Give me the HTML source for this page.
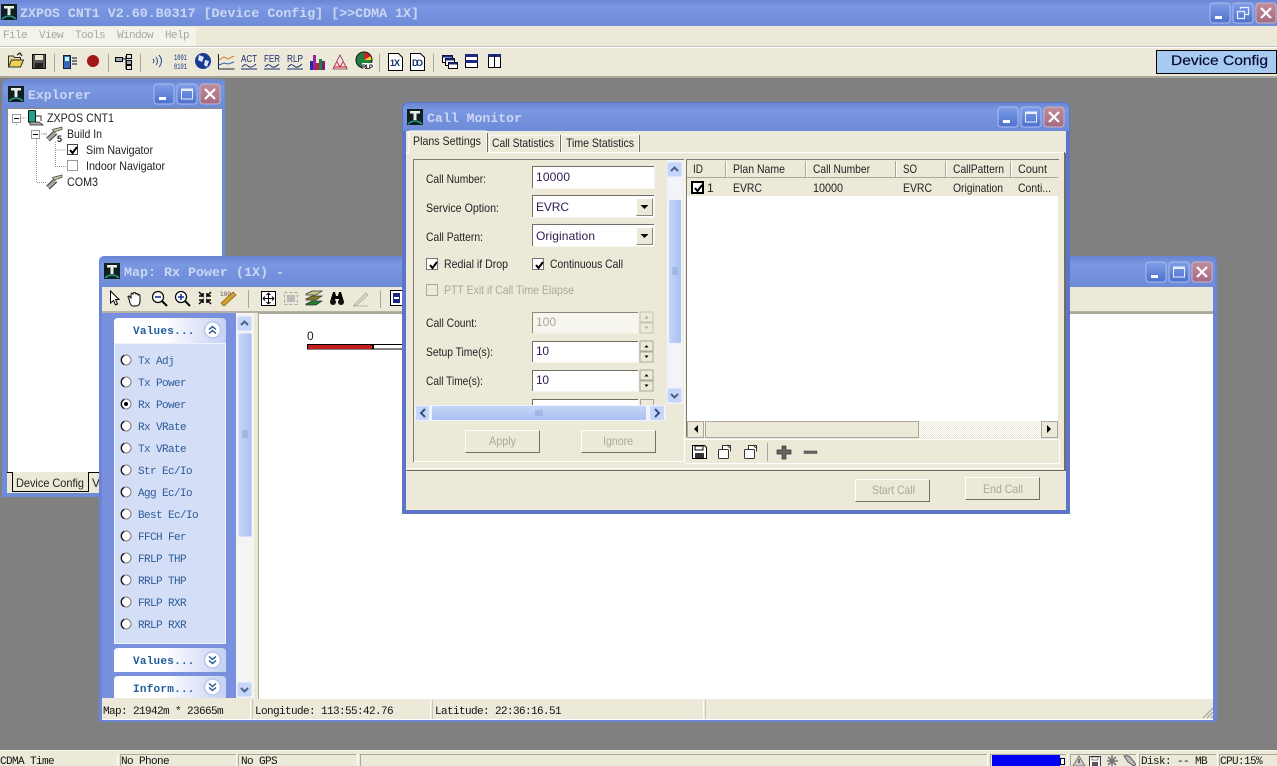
<!DOCTYPE html>
<html><head><meta charset="utf-8"><title>ZXPOS CNT1</title>
<style>
html,body{margin:0;padding:0;width:1277px;height:766px;overflow:hidden;background:#808080}
svg{display:block}
text{white-space:pre}
.s{font:12px "Liberation Sans",sans-serif;fill:#222}
.g{font:12px "Liberation Sans",sans-serif;fill:#aca899}
.v{font:12px "Liberation Sans",sans-serif;fill:#301850}
.m{font:11px "Liberation Mono",monospace;letter-spacing:-.6px;fill:#111}
.b{font:11px "Liberation Mono",monospace;letter-spacing:-.6px;fill:#2f5c98}
.mg{font:11px "Liberation Mono",monospace;letter-spacing:-.6px;fill:#a8a8a0}
.t{font:bold 13px "Liberation Mono",monospace;fill:#cbd7f2}
.h{font:bold 11px "Liberation Mono",monospace;fill:#215c9c;letter-spacing:.6px}
</style></head><body>
<svg width="1277" height="766" viewBox="0 0 1277 766" xmlns="http://www.w3.org/2000/svg">
<defs>
<linearGradient id="tb" x1="0" y1="0" x2="0" y2="1"><stop offset="0" stop-color="#6a86d4"/><stop offset=".25" stop-color="#7a97e2"/><stop offset="1" stop-color="#6e8bd8"/></linearGradient>
<linearGradient id="bb" x1="0" y1="0" x2="0" y2="1"><stop offset="0" stop-color="#7f9fe8"/><stop offset="1" stop-color="#4e70cc"/></linearGradient>
<linearGradient id="br" x1="0" y1="0" x2="0" y2="1"><stop offset="0" stop-color="#c08e9c"/><stop offset="1" stop-color="#a56a80"/></linearGradient>
<linearGradient id="ph" x1="0" y1="0" x2="1" y2="0"><stop offset="0" stop-color="#fff"/><stop offset=".45" stop-color="#fff"/><stop offset="1" stop-color="#c4d1f3"/></linearGradient>
<linearGradient id="sb" x1="0" y1="0" x2="1" y2="0"><stop offset="0" stop-color="#c6d6f8"/><stop offset="1" stop-color="#a8c0f0"/></linearGradient>
<linearGradient id="sh" x1="0" y1="0" x2="0" y2="1"><stop offset="0" stop-color="#c6d6f8"/><stop offset="1" stop-color="#a8c0f0"/></linearGradient>
<pattern id="dith" width="2" height="2" patternUnits="userSpaceOnUse"><rect width="2" height="2" fill="#fff"/><rect width="1" height="1" fill="#ece9d8"/><rect x="1" y="1" width="1" height="1" fill="#ece9d8"/></pattern>
<g id="logo"><rect width="16" height="16" fill="#10201e"/><path d="M3 2h10v2.500H9.500V11h-3V4.500H3z" fill="#e8efe8"/><path d="M1 15q7-6 14 0" fill="none" stroke="#2a9a90" stroke-width="1.500"/></g>
<g id="min"><rect width="20" height="20" rx="3" fill="url(#bb)" stroke="#a9bdec"/><rect x="5" y="13" width="7" height="3" fill="#fff"/></g>
<g id="max"><rect width="20" height="20" rx="3" fill="url(#bb)" stroke="#a9bdec"/><rect x="4.500" y="5" width="11" height="10" fill="none" stroke="#e8eefc"/><rect x="4.500" y="4.500" width="11" height="2.500" fill="#e8eefc"/></g>
<g id="res"><rect width="20" height="20" rx="3" fill="url(#bb)" stroke="#a9bdec"/><rect x="4.500" y="8.500" width="7" height="7" fill="none" stroke="#eef" stroke-width="1.200"/><path d="M7.500 6V4.500h8v7H12" fill="none" stroke="#eef" stroke-width="1.200"/></g>
<g id="cls"><rect width="20" height="20" rx="3" fill="url(#br)" stroke="#c8b4c8"/><path d="M5 5l10 10M15 5L5 15" stroke="#fff" stroke-width="2.200"/></g>
<g id="up"><rect width="15" height="15" rx="2" fill="#c6d6f8" stroke="#eef2fc"/><path d="M4 9l3.500-3.500L11 9" fill="none" stroke="#4d6185" stroke-width="2"/></g>
<g id="dn"><rect width="15" height="15" rx="2" fill="#c6d6f8" stroke="#eef2fc"/><path d="M4 6l3.500 3.500L11 6" fill="none" stroke="#4d6185" stroke-width="2"/></g>
<g id="radio"><circle r="5" fill="#fff" stroke="#777"/><path d="M-1.800-4.500A5 5 0 0 0-1.800 4.500" fill="none" stroke="#111" stroke-width="1.300"/></g>
<g id="cu"><circle r="8" fill="#fff" stroke="#b9c6e8" stroke-width="1.500"/><path d="M-3.500-.5L0-3.500 3.500-.5M-3.500 3.500L0 .5 3.500 3.500" fill="none" stroke="#22508c" stroke-width="1.400"/></g>
<g id="cd"><circle r="8" fill="#fff" stroke="#b9c6e8" stroke-width="1.500"/><path d="M-3.500-3.500L0-.5 3.500-3.500M-3.500 .5L0 3.500 3.500 .5" fill="none" stroke="#22508c" stroke-width="1.400"/></g>
<g id="port"><path d="M2 13.500L9.500 6.500" stroke="#333" stroke-width="5"/><path d="M2 13.500L9.500 6.500" stroke="#a8a89c" stroke-width="3.200"/><path d="M6.500 3.500l9.500-2.500v2.500L8 6z" fill="#c8c49a" stroke="#444" stroke-width=".7"/></g>
<g id="chk"><path d="M3 6l2.500 3L10 3" fill="none" stroke="#000" stroke-width="2"/></g>
<g id="spin"><rect width="13" height="10" fill="#ece9d8" stroke="#aca899"/><rect y="11" width="13" height="10" fill="#ece9d8" stroke="#aca899"/><path d="M4.500 6.500h4L6.500 4zM4.500 14.500h4l-2 2.500z" fill="#000"/></g>
<g id="spind"><rect width="13" height="10" fill="#ece9d8" stroke="#c8c4b4"/><rect y="11" width="13" height="10" fill="#ece9d8" stroke="#c8c4b4"/><path d="M4.500 6.500h4L6.500 4zM4.500 14.500h4l-2 2.500z" fill="#aca899"/></g>
<g id="arrow"><rect width="17" height="18" fill="#ece9d8"/><path d="M.5 17.500V.5h16" fill="none" stroke="#fff"/><path d="M.5 17.500h16V.5" fill="none" stroke="#8a8778"/><path d="M4.500 7h8l-4 4z" fill="#000"/></g>
<g id="doc"><path d="M.5.5h10l4 4v13H.5z" fill="#fff" stroke="#000"/></g>
</defs>

<!-- desktop -->
<rect width="1277" height="766" fill="#808080"/>
<!-- main title -->
<rect width="1277" height="26" fill="url(#tb)"/>
<use href="#logo" x="1" y="4"/>
<text class="t" x="20" y="17" textLength="399" lengthAdjust="spacingAndGlyphs">ZXPOS CNT1 V2.60.B0317 [Device Config] [&gt;&gt;CDMA 1X]</text>
<use href="#min" x="1210" y="3"/><use href="#res" x="1233" y="3"/><use href="#cls" x="1256" y="3"/>
<!-- menu -->
<rect y="26" width="1277" height="51" fill="#ece9d8"/>
<rect y="27" width="196" height="19" fill="#f4f3ea"/>
<rect y="46" width="1277" height="1" fill="#c8c6b8"/><rect y="47" width="1277" height="1" fill="#fff"/>
<text class="mg" x="3" y="38">File</text><text class="mg" x="39" y="38">View</text><text class="mg" x="75" y="38">Tools</text><text class="mg" x="117" y="38">Window</text><text class="mg" x="165" y="38">Help</text>
<rect y="76" width="1277" height="2" fill="#a8a698"/>

<!-- main toolbar icons -->
<g>
<path d="M8.500 67V56h5l1 1.500h6V60" fill="#e8d890" stroke="#333"/><path d="M8.500 67l3-7h12l-3 7z" fill="#f0d050" stroke="#333"/><path d="M17 55l3-2 2 3" fill="none" stroke="#222" stroke-width="1.200"/>
<rect x="32.500" y="54.500" width="13" height="14" fill="#555" stroke="#111"/><rect x="35" y="55" width="8" height="5" fill="#e8e4c8"/><rect x="35" y="63" width="8" height="5" fill="#222"/>
<rect x="54" y="54" width="1" height="18" fill="#aca899"/>
<rect x="63.500" y="55.500" width="7" height="13" fill="#3a66c0" stroke="#123"/><rect x="65" y="57" width="4" height="4" fill="#bfe"/><path d="M72 58h5M72 61h5M72 64h5" stroke="#334" stroke-width="1.200"/>
<circle cx="93" cy="61" r="6" fill="#a01818"/>
<rect x="108" y="54" width="1" height="18" fill="#aca899"/>
<rect x="115.500" y="57.500" width="7" height="4" fill="#9ab" stroke="#000"/><path d="M122 59h4M126 56v13" stroke="#000"/><rect x="126.500" y="54.500" width="5" height="4" fill="#ddd" stroke="#000"/><rect x="126.500" y="60.500" width="5" height="4" fill="#9ab" stroke="#000"/><rect x="126.500" y="65.500" width="5" height="4" fill="#ddd" stroke="#000"/>
<rect x="140" y="54" width="1" height="18" fill="#aca899"/>
<path d="M153 59q2 2 0 4M156 57q3 4 0 8M159 55q5 6 0 12" fill="none" stroke="#2a4a90" stroke-width="1"/>
<text x="174" y="60" style="font:8px 'Liberation Mono',monospace;fill:#123a80" textLength="13" lengthAdjust="spacingAndGlyphs">1001</text><text x="174" y="69" style="font:8px 'Liberation Mono',monospace;fill:#123a80" textLength="13" lengthAdjust="spacingAndGlyphs">0101</text>
<circle cx="203" cy="61" r="8" fill="#1a3a90"/><path d="M199 55l5 2-2 5-4-2zM205 60l4 1-2 6-3-2z" fill="#dfe8ff"/>
<path d="M218.500 54v15h16" fill="none" stroke="#223"/><path d="M219 60l5-3 4 2 6-3" fill="none" stroke="#d08020"/><path d="M219 65l5-2 4 1 6-2" fill="none" stroke="#3060b0"/>
<text x="241" y="62" style="font:10px 'Liberation Sans',sans-serif;fill:#1a2a70" textLength="16" lengthAdjust="spacingAndGlyphs">ACT</text>
<text x="264" y="62" style="font:10px 'Liberation Sans',sans-serif;fill:#1a2a70" textLength="16" lengthAdjust="spacingAndGlyphs">FER</text>
<text x="287" y="62" style="font:10px 'Liberation Sans',sans-serif;fill:#1a2a70" textLength="16" lengthAdjust="spacingAndGlyphs">RLP</text>
<path d="M241 69h16M242 67q3-4 6-1t8-2M264 69h16M265 67q3-4 6-1t8-2M287 69h16M288 67q3-4 6-1t8-2" fill="none" stroke="#1a2a70" stroke-width=".9"/>
<rect x="310" y="61" width="3" height="9" fill="#2030a0"/><rect x="313" y="55" width="3" height="15" fill="#a020a0"/><rect x="316" y="63" width="3" height="7" fill="#c02040"/><rect x="319" y="59" width="3" height="11" fill="#208040"/><rect x="322" y="61" width="3" height="9" fill="#801880"/>
<path d="M340 55l7 14h-14z" fill="#fde" stroke="#703040" stroke-width=".8"/><path d="M334 67h13M337 62l3 5 3-5" fill="none" stroke="#c02020" stroke-width=".9"/>
<circle cx="364" cy="60" r="8" fill="#208040"/><path d="M364 60l0-8a8 8 0 0 1 7 4z" fill="#d02030"/><path d="M364 60l7-4a8 8 0 0 1 1 4z" fill="#f0d020"/><circle cx="364" cy="60" r="8" fill="none" stroke="#111"/>
<rect x="362" y="63" width="12" height="6" fill="#fff"/><text x="362" y="69" style="font:bold 6px 'Liberation Sans',sans-serif;fill:#000" textLength="11">RLP</text>
<rect x="379" y="54" width="1" height="18" fill="#aca899"/>
<use href="#doc" x="388" y="53"/><text x="390" y="66" style="font:bold 9px 'Liberation Sans',sans-serif;fill:#123070" textLength="10">1X</text>
<use href="#doc" x="410" y="53"/><text x="412" y="66" style="font:bold 9px 'Liberation Sans',sans-serif;fill:#123070" textLength="11">DO</text>
<rect x="433" y="54" width="1" height="18" fill="#aca899"/>
<rect x="442.500" y="55.500" width="10" height="7" fill="#fff" stroke="#000"/><rect x="442.500" y="55.500" width="10" height="2" fill="#1a2a80"/><rect x="445.500" y="58.500" width="9" height="7" fill="#fff" stroke="#000"/><rect x="445.500" y="58.500" width="9" height="2" fill="#1a2a80"/><rect x="448.500" y="62.500" width="9" height="6" fill="#fff" stroke="#000"/><rect x="448.500" y="62.500" width="9" height="2" fill="#1a2a80"/>
<rect x="465.500" y="54.500" width="12" height="13" fill="#fff" stroke="#000"/><rect x="465" y="54" width="13" height="3" fill="#1a2a80"/><rect x="465" y="60" width="13" height="3" fill="#1a2a80"/>
<rect x="488.500" y="54.500" width="12" height="13" fill="#fff" stroke="#000"/><rect x="488" y="54" width="13" height="3" fill="#1a2a80"/><path d="M494.500 55v12" stroke="#000"/>
</g>
<rect x="1156.500" y="50.500" width="120" height="23" fill="#a6caf0" stroke="#000"/>
<text x="1171" y="65" style="font:14px 'Liberation Sans',sans-serif;fill:#0a0a30;stroke:#0a0a30;stroke-width:.2" textLength="97" lengthAdjust="spacingAndGlyphs">Device Config</text>

<!-- EXPLORER -->
<path d="M2 497V85q0-6 6-6h211q6 0 6 6v412z" fill="#6f8cdb"/>
<path d="M3 108V86q0-6 6-6h209q6 0 6 6v22z" fill="url(#tb)"/>
<use href="#logo" x="8" y="86"/>
<text class="t" x="28" y="99" textLength="63" lengthAdjust="spacingAndGlyphs">Explorer</text>
<use href="#min" x="154" y="84"/><use href="#max" x="177" y="84"/><use href="#cls" x="200" y="84"/>
<rect x="7" y="108" width="215" height="364" fill="#fff"/>
<path d="M7.500 472V108.500H222" fill="none" stroke="#8c8a7c"/>
<rect x="7" y="472" width="215" height="21" fill="#ece9d8"/>
<path d="M16.500 122v4M36.500 139v43.500H46M55.500 142v24.500H66M55.500 150H66M44 134h3" fill="none" stroke="#999" stroke-dasharray="1 1"/>
<path d="M21 118h6M41 134h5" stroke="#999" stroke-dasharray="1 1"/>
<rect x="12.500" y="114.500" width="8" height="8" fill="#fff" stroke="#999"/><path d="M14 118.500h5" stroke="#000"/>
<rect x="31.500" y="130.500" width="8" height="8" fill="#fff" stroke="#999"/><path d="M33 134.500h5" stroke="#000"/>
<rect x="28.500" y="110.500" width="7" height="12" rx="1" fill="#20a090" stroke="#111"/><path d="M30 122l9 0 4 3H30z" fill="#aaa" stroke="#222" stroke-width=".7"/><path d="M36 116h5v5" fill="none" stroke="#333"/>
<text class="s" x="47" y="122" textLength="67" lengthAdjust="spacingAndGlyphs">ZXPOS CNT1</text>
<use href="#port" x="46" y="126"/><text x="57" y="142" style="font:bold 9px 'Liberation Sans',sans-serif;fill:#222">5</text>
<text class="s" x="67" y="138" textLength="35" lengthAdjust="spacingAndGlyphs">Build In</text>
<rect x="67.500" y="144.500" width="10" height="10" fill="#fff" stroke="#444"/><use href="#chk" x="67" y="144"/>
<text class="s" x="86" y="154" textLength="67" lengthAdjust="spacingAndGlyphs">Sim Navigator</text>
<rect x="67.500" y="160.500" width="10" height="10" fill="#fff" stroke="#999"/>
<text class="s" x="86" y="170" textLength="79" lengthAdjust="spacingAndGlyphs">Indoor Navigator</text>
<use href="#port" x="46" y="174"/>
<text class="s" x="67" y="186" textLength="31" lengthAdjust="spacingAndGlyphs">COM3</text>
<path d="M7 472.500h5.500v19h76v-19H99" fill="none" stroke="#000"/>
<rect x="13" y="473" width="75" height="18" fill="#ece9d8"/>
<text class="s" x="16" y="487" textLength="68" lengthAdjust="spacingAndGlyphs">Device Config</text>
<text class="s" x="92" y="487">V</text>

<!-- MAP WINDOW -->
<path d="M99 722V262q0-6 6-6h1106q6 0 6 6v460z" fill="#6a85d6"/>
<path d="M100 287V263q0-6 6-6h1104q5 0 5 6v24z" fill="url(#tb)"/>
<use href="#logo" x="104" y="263"/>
<text class="t" x="124" y="276" textLength="160" lengthAdjust="spacingAndGlyphs">Map: Rx Power (1X) -</text>
<use href="#min" x="1146" y="262"/><use href="#max" x="1169" y="262"/><use href="#cls" x="1192" y="262"/>
<rect x="102" y="287" width="1111" height="433" fill="#ece9d8"/>
<rect x="102" y="311" width="1111" height="2" fill="#b4b2a2"/>
<!-- map toolbar -->
<g>
<path d="M110.500 291v12l3-2.500 2 4.500 2-1-2-4.500h3.500z" fill="#fff" stroke="#000"/>
<path d="M129 299q-2-3 0-3l2 2v-4q1-2 2 0l.5-1q1-1 2 0l.5 1q1-1 2 0v1q2-1 2 1v5q0 5-4 5h-3q-2 0-3-3z" fill="#fff" stroke="#000"/>
<circle cx="158" cy="297" r="5.500" fill="#fff" stroke="#000" stroke-width="1.200"/><path d="M155 297h6" stroke="#123a90" stroke-width="1.600"/><path d="M162 301l5 5" stroke="#000" stroke-width="2"/>
<circle cx="181" cy="297" r="5.500" fill="#fff" stroke="#000" stroke-width="1.200"/><path d="M178 297h6M181 294v6" stroke="#123a90" stroke-width="1.600"/><path d="M185 301l5 5" stroke="#000" stroke-width="2"/>
<path d="M199 292l4 4v-3M199 304l4-4v3M211 292l-4 4v-3M211 304l-4-4v3M199 296h4M199 300h4M207 296h4M207 300h4" fill="none" stroke="#000" stroke-width="1.500"/>
<path d="M221 303l12-11 3 3-12 11z" fill="#d0a030" stroke="#906010" stroke-width=".8"/><text x="220" y="296" style="font:6px 'Liberation Mono',monospace;fill:#654">100</text>
<rect x="248" y="290" width="1" height="18" fill="#aca899"/>
<rect x="261.500" y="291.500" width="14" height="14" fill="#fff" stroke="#000"/><path d="M268.500 293v11M263 298.500h11M268.500 293l-2 2M268.500 293l2 2M268.500 304l-2-2M268.500 304l2-2M263 298.500l2-2M263 298.500l2 2M274 298.500l-2-2M274 298.500l-2 2" fill="none" stroke="#000"/>
<rect x="284.500" y="292.500" width="13" height="12" fill="#e8e6d8" stroke="#aca899" stroke-dasharray="3 2"/><rect x="287" y="295" width="8" height="7" fill="#bbb"/>
<path d="M306 294l6-3h10l-6 4h-10z" fill="#c8c890" stroke="#333" stroke-width=".7"/><path d="M306 299l6-3h10l-6 4h-10z" fill="#808020" stroke="#333" stroke-width=".7"/><path d="M306 304l6-3h10l-6 4h-10z" fill="#208030" stroke="#333" stroke-width=".7"/>
<path d="M330 302l3-10h2l1 4h2l1-4h2l3 10h-5v-3h-4v3z" fill="#000"/><circle cx="333" cy="302" r="3" fill="#111"/><circle cx="341" cy="302" r="3" fill="#111"/>
<path d="M354 305l12-12 2 2-11 10z" fill="#d8d6c8" stroke="#bcb9aa"/><path d="M353 306h15" stroke="#bcb9aa"/>
<rect x="380" y="290" width="1" height="18" fill="#aca899"/>
<rect x="390.500" y="290.500" width="12" height="15" fill="#fff" stroke="#000"/><rect x="393" y="293" width="7" height="10" fill="#1a2a80"/><rect x="394" y="297" width="5" height="2" fill="#fff"/>
</g>
<!-- side panel -->
<rect x="102" y="313" width="134" height="385" fill="#7890de"/>
<path d="M114 343v-21q0-4 4-4h104q4 0 4 4v21z" fill="url(#ph)"/>
<rect x="114.500" y="343.500" width="111" height="300" fill="#d4def6" stroke="#eef2fc"/>
<text class="h" x="133" y="334" textLength="62">Values...</text><use href="#cu" x="212.500" y="330"/>
<g>
<use href="#radio" x="126" y="360"/><text class="b" x="138" y="364">Tx Adj</text>
<use href="#radio" x="126" y="382"/><text class="b" x="138" y="386">Tx Power</text>
<use href="#radio" x="126" y="404"/><circle cx="126" cy="404" r="2" fill="#000"/><text class="b" x="138" y="408">Rx Power</text>
<use href="#radio" x="126" y="426"/><text class="b" x="138" y="430">Rx VRate</text>
<use href="#radio" x="126" y="448"/><text class="b" x="138" y="452">Tx VRate</text>
<use href="#radio" x="126" y="470"/><text class="b" x="138" y="474">Str Ec/Io</text>
<use href="#radio" x="126" y="492"/><text class="b" x="138" y="496">Agg Ec/Io</text>
<use href="#radio" x="126" y="514"/><text class="b" x="138" y="518">Best Ec/Io</text>
<use href="#radio" x="126" y="536"/><text class="b" x="138" y="540">FFCH Fer</text>
<use href="#radio" x="126" y="558"/><text class="b" x="138" y="562">FRLP THP</text>
<use href="#radio" x="126" y="580"/><text class="b" x="138" y="584">RRLP THP</text>
<use href="#radio" x="126" y="602"/><text class="b" x="138" y="606">FRLP RXR</text>
<use href="#radio" x="126" y="624"/><text class="b" x="138" y="628">RRLP RXR</text>
</g>
<path d="M114 672v-20q0-4 4-4h104q4 0 4 4v20z" fill="url(#ph)"/>
<text class="h" x="133" y="664" textLength="62">Values...</text><use href="#cd" x="212.500" y="660"/>
<path d="M114 698v-18q0-4 4-4h104q4 0 4 4v18z" fill="url(#ph)"/>
<text class="h" x="133" y="692" textLength="62">Inform...</text><use href="#cd" x="212.500" y="687"/>
<!-- side scroll -->
<rect x="236" y="313" width="18" height="385" fill="#f4f4f0"/>
<use href="#up" x="237" y="316"/><use href="#dn" x="237" y="682"/>
<rect x="238" y="333" width="14" height="204" rx="2" fill="url(#sb)" stroke="#eef2fc"/>
<path d="M242 431h6M242 433h6M242 435h6M242 437h6" stroke="#8ea4d0"/>
<!-- map area -->
<rect x="258" y="312" width="955" height="388" fill="#aca899"/>
<rect x="259" y="314" width="954" height="385" fill="#fff"/>
<text class="s" x="307" y="340">0</text>
<rect x="307.500" y="344.500" width="100" height="4.500" fill="#fff" stroke="#000"/><rect x="308" y="345" width="64" height="4" fill="#c42020"/><rect x="372" y="345" width="2" height="4" fill="#000"/>
<!-- map status -->
<rect x="102" y="699" width="1111" height="21" fill="#ece9d8"/>
<path d="M102 719.500h148M250.500 700v20M430.500 700v20M703.500 700v20" stroke="#fff"/>
<path d="M252.500 700v19M432.500 700v19M705.500 700v19" stroke="#c8c6b8"/>
<path d="M102 719.500H1213" stroke="#fff"/>
<text class="m" x="103" y="714">Map: 21942m * 23665m</text>
<text class="m" x="255" y="714">Longitude: 113:55:42.76</text>
<text class="m" x="435" y="714">Latitude: 22:36:16.51</text>
<path d="M1203 718l10-10M1207 718l6-6M1211 718l2-2" stroke="#999"/>

<!-- CALL MONITOR -->
<path d="M402 514V108q0-6 6-6h656q6 0 6 6v406z" fill="#5d75c8"/>
<path d="M403 131V109q0-6 6-6h654q6 0 6 6v22z" fill="url(#tb)"/>
<use href="#logo" x="407" y="109"/>
<text class="t" x="427" y="122" textLength="95" lengthAdjust="spacingAndGlyphs">Call Monitor</text>
<use href="#min" x="998" y="107"/><use href="#max" x="1021" y="107"/><use href="#cls" x="1044" y="107"/>
<rect x="406" y="131" width="660" height="379" fill="#ece9d8"/>
<!-- tab page -->
<path d="M406.500 470.500h659V152" fill="none" stroke="#716f64"/>
<path d="M406 152.500h3M487 152.500h579M406 468.500h659" stroke="#fff"/>
<path d="M409 152v-20q0-1 2-1h74q2 0 2 1v20" fill="#ece9d8" stroke="#fff"/><path d="M487.500 133v19" stroke="#716f64"/>
<path d="M489.500 152v-17h70v17M561.500 152v-17h77v17" fill="none" stroke="#fff"/><path d="M560.500 135v17M639.500 135v17" stroke="#716f64"/>
<text class="s" x="413" y="145" textLength="68" lengthAdjust="spacingAndGlyphs">Plans Settings</text>
<text class="s" x="492" y="147" textLength="62" lengthAdjust="spacingAndGlyphs">Call Statistics</text>
<text class="s" x="566" y="147" textLength="68" lengthAdjust="spacingAndGlyphs">Time Statistics</text>
<!-- left frame -->
<path d="M413.500 462V159.500H684" fill="none" stroke="#7e7c70"/>
<path d="M414 461.500H684M684.500 160V462" stroke="#fff"/>
<text class="s" x="426" y="183" textLength="60" lengthAdjust="spacingAndGlyphs">Call Number:</text>
<rect x="532.500" y="166.500" width="122" height="22" fill="#fff"/><path d="M532.500 188v-21.500H654" fill="none" stroke="#716f64"/>
<text class="v" x="536" y="181" textLength="34">10000</text>
<text class="s" x="426" y="212" textLength="73" lengthAdjust="spacingAndGlyphs">Service Option:</text>
<rect x="532.500" y="195.500" width="122" height="22" fill="#fff"/><path d="M532.500 217v-21.500H654" fill="none" stroke="#716f64"/>
<text class="v" x="536" y="211" textLength="33">EVRC</text><use href="#arrow" x="636" y="198"/>
<text class="s" x="426" y="241" textLength="57" lengthAdjust="spacingAndGlyphs">Call Pattern:</text>
<rect x="532.500" y="224.500" width="122" height="22" fill="#fff"/><path d="M532.500 246v-21.500H654" fill="none" stroke="#716f64"/>
<text class="v" x="536" y="240" textLength="59">Origination</text><use href="#arrow" x="636" y="227"/>
<rect x="426.500" y="258.500" width="11" height="11" fill="#fff" stroke="#777"/><use href="#chk" x="427" y="259"/>
<text class="s" x="444" y="268" textLength="64" lengthAdjust="spacingAndGlyphs">Redial if Drop</text>
<rect x="532.500" y="258.500" width="11" height="11" fill="#fff" stroke="#777"/><use href="#chk" x="533" y="259"/>
<text class="s" x="550" y="268" textLength="73" lengthAdjust="spacingAndGlyphs">Continuous Call</text>
<rect x="426.500" y="284.500" width="11" height="11" fill="#ece9d8" stroke="#aca899"/>
<text class="g" x="444" y="294" textLength="130" lengthAdjust="spacingAndGlyphs">PTT Exit if Call Time Elapse</text>
<text class="s" x="426" y="327" textLength="51" lengthAdjust="spacingAndGlyphs">Call Count:</text>
<rect x="532.500" y="312.500" width="106" height="21" fill="#f6f5ee"/><path d="M532.500 333v-20.500H638" fill="none" stroke="#8a887a"/>
<text class="g" x="536" y="326" textLength="20">100</text><use href="#spind" x="640" y="312"/>
<text class="s" x="426" y="356" textLength="67" lengthAdjust="spacingAndGlyphs">Setup Time(s):</text>
<rect x="532.500" y="341.500" width="106" height="21" fill="#fff"/><path d="M532.500 362v-20.500H638" fill="none" stroke="#716f64"/>
<text class="v" x="536" y="355" textLength="13">10</text><use href="#spin" x="640" y="341"/>
<text class="s" x="426" y="385" textLength="57" lengthAdjust="spacingAndGlyphs">Call Time(s):</text>
<rect x="532.500" y="370.500" width="106" height="21" fill="#fff"/><path d="M532.500 391v-20.500H638" fill="none" stroke="#716f64"/>
<text class="v" x="536" y="384" textLength="13">10</text><use href="#spin" x="640" y="370"/>
<rect x="532.500" y="399.500" width="106" height="6" fill="#fff"/><path d="M532.500 405v-5.500H638" fill="none" stroke="#716f64"/>
<rect x="640.500" y="399.500" width="13" height="6" fill="#ece9d8" stroke="#aca899"/>
<!-- v scroll -->
<rect x="667" y="160" width="16" height="244" fill="#f3f4f8"/>
<use href="#up" x="667" y="162"/><use href="#dn" x="667" y="388"/>
<rect x="668.500" y="199.500" width="13" height="144" rx="2" fill="url(#sb)" stroke="#eef2fc"/>
<path d="M672 268h6M672 270h6M672 272h6M672 274h6" stroke="#8ea4d0"/>
<!-- h scroll -->
<rect x="415" y="405" width="251" height="16" fill="#f3f4f8"/>
<rect x="415.500" y="405.500" width="14" height="15" rx="2" fill="#c6d6f8" stroke="#eef2fc"/><path d="M425 409l-4 4 4 4" fill="none" stroke="#33507f" stroke-width="2"/>
<rect x="431.500" y="405.500" width="215" height="15" rx="2" fill="url(#sh)" stroke="#eef2fc"/>
<path d="M536 410v6M538 410v6M540 410v6M542 410v6" stroke="#8ea4d0"/>
<rect x="649.500" y="405.500" width="15" height="15" rx="2" fill="#c6d6f8" stroke="#eef2fc"/><path d="M655 409l4 4-4 4" fill="none" stroke="#33507f" stroke-width="2"/>
<!-- buttons -->
<rect x="465.500" y="430.500" width="74" height="22" fill="#ece9d8" stroke="#fff"/><path d="M465.500 452.500h74v-22" fill="none" stroke="#716f64"/>
<text class="g" x="489" y="445" textLength="27" lengthAdjust="spacingAndGlyphs">Apply</text>
<rect x="581.500" y="430.500" width="74" height="22" fill="#ece9d8" stroke="#fff"/><path d="M581.500 452.500h74v-22" fill="none" stroke="#716f64"/>
<text class="g" x="603" y="445" textLength="30" lengthAdjust="spacingAndGlyphs">Ignore</text>
<rect x="855.500" y="479.500" width="74" height="22" fill="#ece9d8" stroke="#fff"/><path d="M855.500 501.500h74v-22" fill="none" stroke="#716f64"/>
<text class="g" x="872" y="494" textLength="43" lengthAdjust="spacingAndGlyphs">Start Call</text>
<rect x="965.500" y="477.500" width="74" height="22" fill="#ece9d8" stroke="#fff"/><path d="M965.500 499.500h74v-22" fill="none" stroke="#716f64"/>
<text class="g" x="983" y="493" textLength="40" lengthAdjust="spacingAndGlyphs">End Call</text>
<!-- list -->
<path d="M686.500 437V159.500H1059" fill="none" stroke="#7e7c70"/>
<rect x="687" y="160" width="371" height="277" fill="#fff"/>
<rect x="687" y="160" width="371" height="18" fill="#ece9d8"/>
<path d="M725.500 161v16M805.500 161v16M895.500 161v16M945.500 161v16M1010.500 161v16" stroke="#aca899"/>
<path d="M726.500 161v16M806.500 161v16M896.500 161v16M946.500 161v16M1011.500 161v16" stroke="#fff"/>
<rect x="687" y="177" width="371" height="1" fill="#aca899"/>
<text class="s" x="693" y="173" textLength="10" lengthAdjust="spacingAndGlyphs">ID</text>
<text class="s" x="733" y="173" textLength="52" lengthAdjust="spacingAndGlyphs">Plan Name</text>
<text class="s" x="813" y="173" textLength="57" lengthAdjust="spacingAndGlyphs">Call Number</text>
<text class="s" x="903" y="173" textLength="14" lengthAdjust="spacingAndGlyphs">SO</text>
<text class="s" x="953" y="173" textLength="51" lengthAdjust="spacingAndGlyphs">CallPattern</text>
<text class="s" x="1018" y="173" textLength="29" lengthAdjust="spacingAndGlyphs">Count</text>
<rect x="687" y="178" width="371" height="18" fill="#ece9d8"/>
<rect x="692" y="182" width="11" height="11" fill="#fff" stroke="#000" stroke-width="2"/><use href="#chk" x="692" y="182"/>
<text class="s" x="707" y="192">1</text>
<text class="s" x="733" y="192" textLength="29" lengthAdjust="spacingAndGlyphs">EVRC</text>
<text class="s" x="813" y="192" textLength="30" lengthAdjust="spacingAndGlyphs">10000</text>
<text class="s" x="903" y="192" textLength="29" lengthAdjust="spacingAndGlyphs">EVRC</text>
<text class="s" x="953" y="192" textLength="50" lengthAdjust="spacingAndGlyphs">Origination</text>
<text class="s" x="1018" y="192" textLength="33" lengthAdjust="spacingAndGlyphs">Conti...</text>
<!-- list hscroll -->
<rect x="687" y="421" width="371" height="17" fill="url(#dith)"/>
<rect x="687.500" y="421.500" width="16" height="16" fill="#ece9d8" stroke="#aca899"/><path d="M698 425v8l-4-4z" fill="#000"/>
<rect x="705.500" y="421.500" width="213" height="16" fill="#ece9d8" stroke="#aca899"/>
<rect x="1041.500" y="421.500" width="16" height="16" fill="#ece9d8" stroke="#aca899"/><path d="M1047 425v8l4-4z" fill="#000"/>
<path d="M685 439.500h374M1059.500 439v24M685 463.500h375" stroke="#fff"/>
<path d="M1064.500 152v318" stroke="#716f64"/>
<!-- list toolbar -->
<path d="M692.500 445.500h12l2 2v11h-14z" fill="#fff" stroke="#000"/><rect x="695" y="446" width="8" height="4" fill="none" stroke="#000"/><rect x="695" y="453" width="9" height="5" fill="#333"/>
<path d="M722.500 451.500v-6h5l3 0v6" fill="#fff" stroke="#333"/><rect x="718.500" y="449.500" width="10" height="9" rx="1" fill="#fff" stroke="#333"/><path d="M727 445l3 3" stroke="#333"/>
<path d="M748.500 451.500v-6h8v6" fill="#fff" stroke="#333"/><rect x="744.500" y="449.500" width="10" height="9" rx="1" fill="#fff" stroke="#333"/><path d="M753 445l3 3" stroke="#333"/>
<rect x="767" y="443" width="1" height="18" fill="#aca899"/>
<path d="M782 446h4v4h5v4h-5v5h-4v-5h-5v-4h5z" fill="#666" stroke="#333" stroke-width=".7"/>
<rect x="804" y="451" width="13" height="2.500" fill="#666" stroke="#444" stroke-width=".5"/>

<!-- bottom status -->
<rect y="750" width="1277" height="16" fill="#ece9d8"/>
<rect y="750" width="1277" height="1" fill="#f8f8f0"/>
<path d="M120.500 766v-11.500H236M238.500 766v-11.500H356M360.500 766v-11.500H988M990.500 766v-11.500H1066M1070.500 766v-11.500H1136M1139.500 766v-11.500H1216M1219.500 766v-11.500H1277" fill="none" stroke="#aca899"/>
<path d="M117.500 754v12M236.500 754v12M357.500 754v12M987.500 754v12M1067.500 754v12M1137.500 754v12M1217.500 754v12" stroke="#fff"/>
<text class="m" x="0" y="764">CDMA Time</text>
<text class="m" x="121" y="764">No Phone</text>
<text class="m" x="241" y="764">No GPS</text>
<rect x="992" y="755" width="68" height="11" fill="#0000f0"/><rect x="1060.500" y="758.500" width="4" height="6" fill="#fff" stroke="#003"/>
<path d="M1079 756l6 10h-12z" fill="#ccc" stroke="#777"/><path d="M1079 759v4" stroke="#222"/>
<rect x="1089.500" y="756.500" width="11" height="10" fill="#fff" stroke="#333"/><rect x="1092" y="762" width="6" height="4" fill="#555"/><rect x="1092" y="757" width="6" height="3" fill="none" stroke="#333" stroke-width=".6"/>
<path d="M1112 755v11M1107 761h11M1108 757l8 8M1116 757l-8 8" stroke="#777" stroke-width="1.600"/><circle cx="1112" cy="761" r="2.500" fill="#777"/>
<path d="M1124 756q4-1 6 1l5 6q1 2-1 3l-6-4z" fill="#bbb" stroke="#444" stroke-width=".8"/>
<text class="m" x="1141" y="764">Disk: -- MB</text>
<text class="m" x="1220" y="764">CPU:15%</text>
</svg>
</body></html>
